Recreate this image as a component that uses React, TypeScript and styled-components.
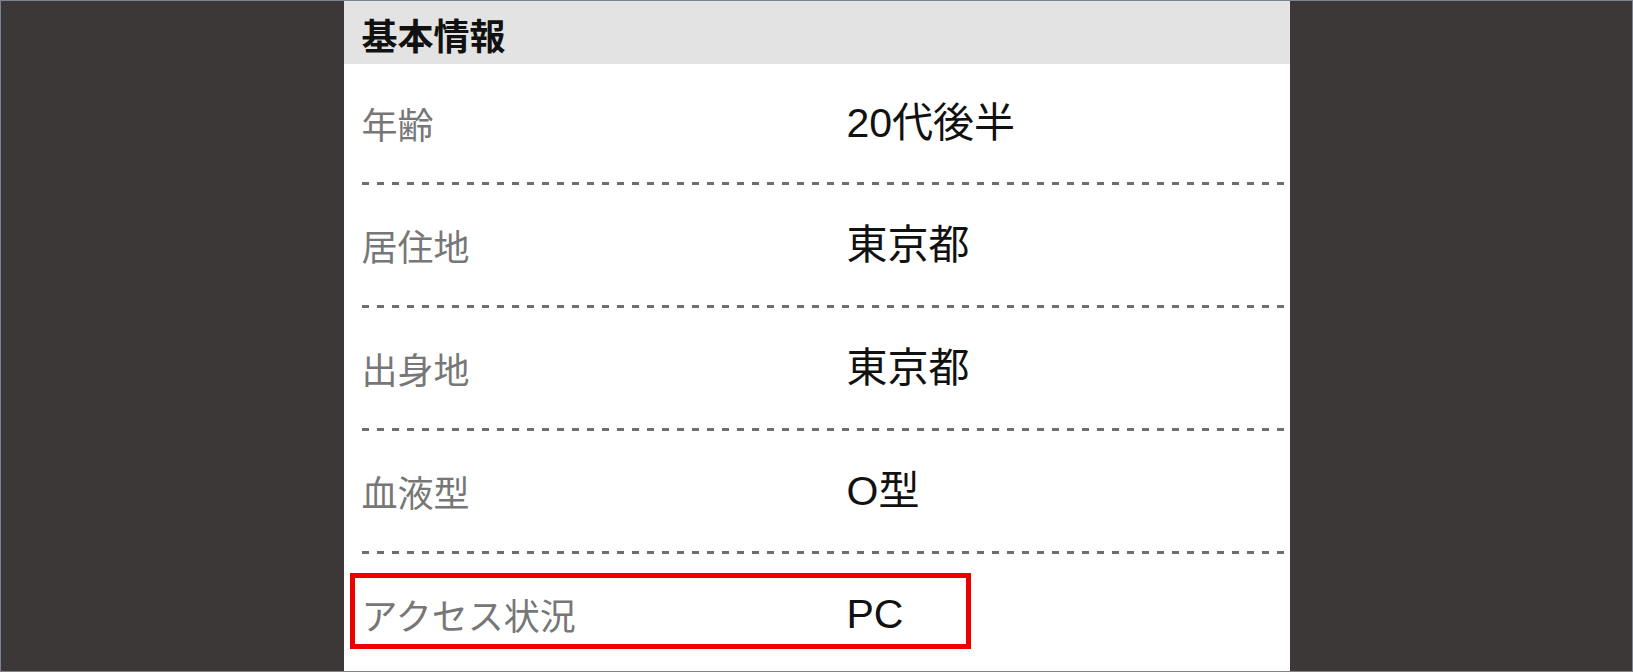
import styled, { createGlobalStyle } from 'styled-components'

const rows = [
	{ label: '年齢', value: '20代後半' },
	{ label: '居住地', value: '東京都' },
	{ label: '出身地', value: '東京都' },
	{ label: '血液型', value: 'O型' },
	{ label: 'アクセス状況', value: 'PC', marked: true },
]

const App = () => {
	return (
		<>
			<GlobalStyle />
			<Frame>
				<Panel>
					<Header>基本情報</Header>
					{rows.map(row => (
						<Row key={row.label} $last={!!row.marked}>
							<Label>{row.label}</Label>
							<Value>{row.value}</Value>
							{row.marked && <Highlight />}
						</Row>
					))}
				</Panel>
			</Frame>
		</>
	)
}

const GlobalStyle = createGlobalStyle`
	html, body {
		margin: 0;
		padding: 0;
		background: #3c3837;
	}

	* {
		box-sizing: border-box;
	}
`

const Frame = styled.div`
	width: 1633px;
	height: 672px;
	border: 1px solid #7b8493;
	background-color: #3c3837;
	overflow: hidden;

	display: flex;
	justify-content: center;
`

const Panel = styled.section`
	width: 946px;
	background-color: #fff;
	font-family: 'Noto Sans CJK JP', sans-serif;
`

const Header = styled.h2`
	margin: 0;
	height: 63px;
	padding: 2px 0 0 18px;
	background-color: #e3e3e3;
	color: #111;
	font-size: 36px;
	font-weight: 700;
	line-height: 1;

	display: flex;
	align-items: center;
`

const Row = styled.div<{ $last?: boolean }>`
	position: relative;
	margin-left: 18px;
	height: 123px;
	padding-bottom: 3px;

	display: grid;
	grid-template-columns: 485px 1fr;
	align-items: center;

	background-image: ${props =>
		props.$last
			? 'none'
			: 'repeating-linear-gradient(to right, #6f6f6f 0 7px, transparent 7px 15px)'};
	background-size: 100% 3px;
	background-position: left bottom;
	background-repeat: no-repeat;

	&:first-of-type {
		height: 121px;
	}
`

const Label = styled.span`
	color: #777;
	font-size: 36px;
	line-height: 1;
`

const Value = styled.span`
	color: #111;
	font-family: 'Liberation Sans', 'Noto Sans CJK JP', sans-serif;
	font-size: 41px;
	line-height: 1;
`

const Highlight = styled.div`
	position: absolute;
	left: -12px;
	top: 19px;
	width: 621px;
	height: 76px;
	border: 5px solid #ee0000;
	pointer-events: none;
`

export default App
